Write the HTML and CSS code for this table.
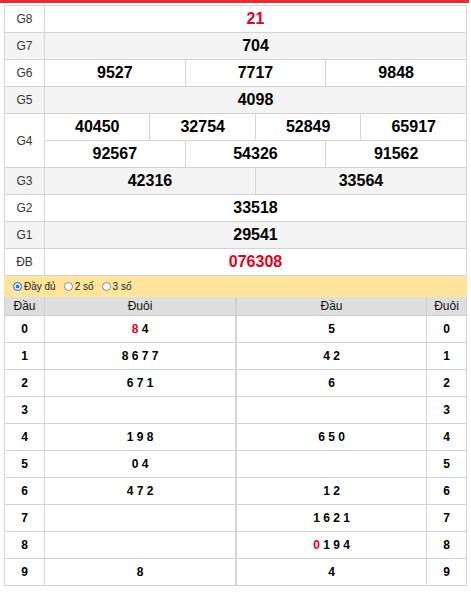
FILE: index.html
```html
<!DOCTYPE html>
<html lang="vi">
<head>
<meta charset="utf-8">
<title>KQXS</title>
<link rel="stylesheet" href="styles.css">
</head>
<body>
<div class="topbar"></div>
<div class="wrap">
  <table class="kq">
    <colgroup><col class="c-label"><col span="12"></colgroup>
    <tr><td class="lbl">G8</td><td colspan="12" class="red">21</td></tr>
    <tr class="alt"><td class="lbl">G7</td><td colspan="12">704</td></tr>
    <tr><td class="lbl">G6</td><td colspan="4">9527</td><td colspan="4">7717</td><td colspan="4">9848</td></tr>
    <tr class="alt"><td class="lbl">G5</td><td colspan="12">4098</td></tr>
    <tr><td class="lbl" rowspan="2">G4</td><td colspan="3">40450</td><td colspan="3">32754</td><td colspan="3">52849</td><td colspan="3">65917</td></tr>
    <tr><td colspan="4">92567</td><td colspan="4">54326</td><td colspan="4">91562</td></tr>
    <tr class="alt"><td class="lbl">G3</td><td colspan="6">42316</td><td colspan="6">33564</td></tr>
    <tr><td class="lbl">G2</td><td colspan="12">33518</td></tr>
    <tr class="alt"><td class="lbl">G1</td><td colspan="12">29541</td></tr>
    <tr><td class="lbl">ĐB</td><td colspan="12" class="red">076308</td></tr>
  </table>

  <div class="opts">
    <label class="opt"><span class="radio on"></span>Đầy đủ</label>
    <label class="opt"><span class="radio"></span>2 số</label>
    <label class="opt"><span class="radio"></span>3 số</label>
  </div>

  <div class="loto">
    <table class="lt lt-l">
      <colgroup><col class="c-narrow"><col></colgroup>
      <tr><th>Đầu</th><th>Đuôi</th></tr>
      <tr><td>0</td><td><span class="red">8</span> 4</td></tr>
      <tr><td>1</td><td>8 6 7 7</td></tr>
      <tr><td>2</td><td>6 7 1</td></tr>
      <tr><td>3</td><td></td></tr>
      <tr><td>4</td><td>1 9 8</td></tr>
      <tr><td>5</td><td>0 4</td></tr>
      <tr><td>6</td><td>4 7 2</td></tr>
      <tr><td>7</td><td></td></tr>
      <tr><td>8</td><td></td></tr>
      <tr><td>9</td><td>8</td></tr>
    </table>
    <table class="lt lt-r">
      <colgroup><col><col class="c-narrow"></colgroup>
      <tr><th>Đầu</th><th>Đuôi</th></tr>
      <tr><td>5</td><td>0</td></tr>
      <tr><td>4 2</td><td>1</td></tr>
      <tr><td>6</td><td>2</td></tr>
      <tr><td></td><td>3</td></tr>
      <tr><td>6 5 0</td><td>4</td></tr>
      <tr><td></td><td>5</td></tr>
      <tr><td>1 2</td><td>6</td></tr>
      <tr><td>1 6 2 1</td><td>7</td></tr>
      <tr><td><span class="red">0</span> 1 9 4</td><td>8</td></tr>
      <tr><td>4</td><td>9</td></tr>
    </table>
  </div>
</div>
</body>
</html>
```

FILE: styles.css
```css
body {
  margin: 0;
  font-family: "Liberation Sans", Arial, sans-serif;
  background: #fff;
  color: #000;
}

.topbar {
  height: 3px;
  width: 469px;
  background: #ee2a2f;
  margin-bottom: 2px;
}

.wrap {
  padding-left: 4px;
}

table {
  border-collapse: collapse;
  table-layout: fixed;
}

.kq {
  width: 463px;
}

.kq .c-label {
  width: 40px;
}

.kq td {
  border: 1px solid #d4d4d4;
  height: 26px;
  padding: 0;
  text-align: center;
  vertical-align: middle;
  font-weight: bold;
  font-size: 16px;
  color: #000;
}

.kq td.lbl {
  font-weight: normal;
  font-size: 12px;
  color: #333;
}

.kq tr.alt td {
  background: #f4f4f4;
}

.red {
  color: #e3001b;
}

.kq td.red {
  color: #e3001b;
}

.opts {
  display: flex;
  align-items: center;
  width: 463px;
  height: 21px;
  box-sizing: border-box;
  padding-left: 9px;
  background: #fee59b;
  font-size: 10px;
  color: #222;
}

.opt {
  display: flex;
  align-items: center;
  margin-right: 8px;
}

.radio {
  width: 9px;
  height: 9px;
  box-sizing: border-box;
  border: 1px solid #8a8a8a;
  border-radius: 50%;
  background: #fff;
  margin-right: 2px;
}

.radio.on {
  border-color: #2b7bd6;
  background: #2b7bd6;
  box-shadow: inset 0 0 0 1.5px #fff;
}

.loto {
  display: flex;
  width: 463px;
}

.lt-l {
  width: 232px;
}

.lt-r {
  width: 231px;
}

.lt .c-narrow {
  width: 40px;
}

.lt th {
  background: #dedede;
  height: 18px;
  padding: 0;
  font-weight: normal;
  font-size: 12px;
  color: #111;
  border-left: 1px solid #d0d0d0;
  border-right: 1px solid #d0d0d0;
  border-bottom: 1px solid #d0d0d0;
  border-top: 0;
}

.lt td {
  height: 26px;
  padding: 0;
  border: 1px solid #d4d4d4;
  text-align: center;
  vertical-align: middle;
  font-size: 12px;
  font-weight: bold;
}
```
